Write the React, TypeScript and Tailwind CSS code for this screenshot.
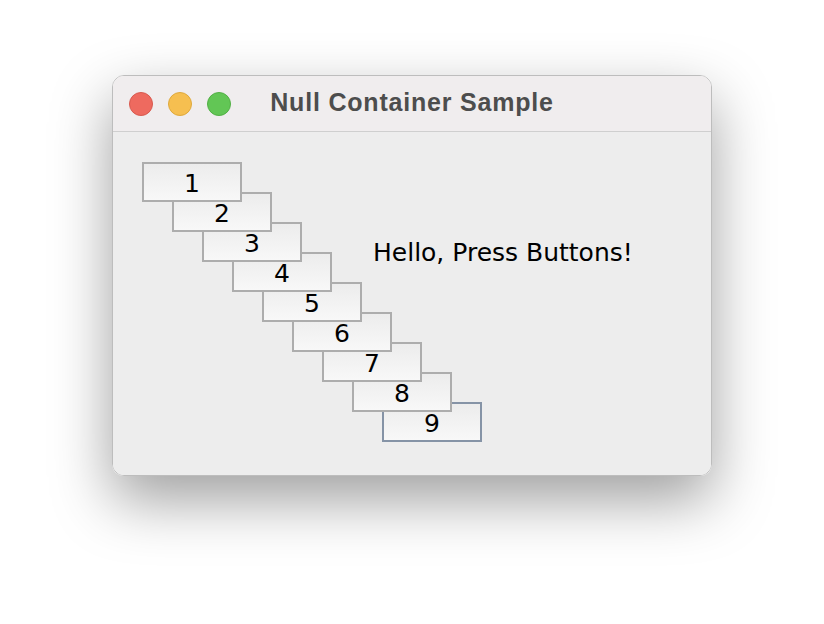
const buttons = [1, 2, 3, 4, 5, 6, 7, 8, 9]

// absolute spots of a null-layout container
const spots = [
  "left-[29px] top-[30px] z-[9]",
  "left-[59px] top-[60px] z-[8]",
  "left-[89px] top-[90px] z-[7]",
  "left-[119px] top-[120px] z-[6]",
  "left-[149px] top-[150px] z-[5]",
  "left-[179px] top-[180px] z-[4]",
  "left-[209px] top-[210px] z-[3]",
  "left-[239px] top-[240px] z-[2]",
  "left-[269px] top-[270px] z-[1]",
]

export default function App() {
  return (
    <main className="w-[824px] h-[624px] bg-white pt-[75px] pl-[112px] overflow-hidden">
      <div className="w-[600px] h-[401px] rounded-[12px] border border-[#bdbdbd] overflow-hidden flex flex-col shadow-[0_24px_60px_rgba(0,0,0,0.38)]">
        {/* title bar */}
        <div className="relative h-[56px] shrink-0 bg-[#f0edee] border-b border-[#cfcfcf] flex items-center justify-center">
          <div className="absolute left-[16px] top-[16px] flex gap-[15px]">
            <span className="w-[24px] h-[24px] rounded-full bg-[#ee6a5f] border border-[#d85a4f]" />
            <span className="w-[24px] h-[24px] rounded-full bg-[#f6bf50] border border-[#dfa93c]" />
            <span className="w-[24px] h-[24px] rounded-full bg-[#62c655] border border-[#52b045]" />
          </div>
          <h1 className="font-['Liberation_Sans',Arial,sans-serif] font-bold text-[25px] tracking-[0.8px] text-[#4d4d4d] mt-[-1px]">
            Null Container Sample
          </h1>
        </div>
        {/* null layout content */}
        <div className="relative flex-1 bg-[#ededed] font-['DejaVu_Sans',sans-serif] text-black">
          {buttons.map((n, i) => (
            <button
              key={n}
              className={`absolute ${spots[i]} w-[100px] h-[40px] border-2 ${n === 9 ? "border-[#8593a6]" : "border-[#adadad]"} bg-gradient-to-b from-[#ececec] to-[#f8f8f8] flex items-center justify-center text-[25px] leading-none pt-[3px]`}
            >
              {n}
            </button>
          ))}
          <span className="absolute left-[260px] top-[106px] text-[25px] leading-[30px] whitespace-nowrap">
            Hello, Press Buttons!
          </span>
        </div>
      </div>
    </main>
  )
}
